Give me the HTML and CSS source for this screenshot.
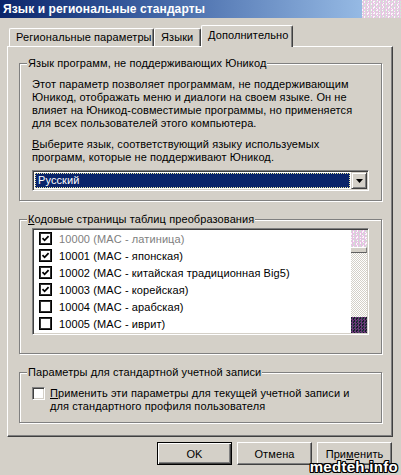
FILE: index.html
```html
<!DOCTYPE html>
<html lang="ru">
<head>
<meta charset="utf-8">
<title>Язык и региональные стандарты</title>
<link rel="stylesheet" href="styles.css">
</head>
<body>
<div class="window">
  <div class="titlebar">
    <span class="title">Язык и региональные стандарты</span>
    <span class="noise"></span>
  </div>
  <div class="tabs">
    <div class="tab t1">Региональные параметры</div>
    <div class="tab t2">Языки</div>
    <div class="tab t3 active">Дополнительно</div>
  </div>
  <div class="panel">
    <div class="group g1">
      <div class="group-title">Язык программ, не поддерживающих Юникод</div>
      <p class="para p1">Этот параметр позволяет программам, не поддерживающим<br>Юникод, отображать меню и диалоги на своем языке. Он не<br>влияет на Юникод-совместимые программы, но применяется<br>для всех пользователей этого компьютера.</p>
      <p class="para p2"><u>В</u>ыберите язык, соответствующий языку используемых<br>программ, которые не поддерживают Юникод.</p>
      <div class="combo">
        <div class="combo-field"><span class="combo-sel">Русский</span></div>
        <div class="combo-btn"><svg width="7" height="4" viewBox="0 0 7 4"><path d="M0 0H7L3.5 4Z" fill="#000"/></svg></div>
      </div>
    </div>
    <div class="group g2">
      <div class="group-title"><u>К</u>одовые страницы таблиц преобразования</div>
      <div class="listbox">
        <ul class="items">
          <li class="item disabled"><span class="flatcb"><svg width="9" height="9" viewBox="0 0 9 9"><path d="M1.5 4.2L3.6 6.3L7.6 2.2" fill="none" stroke="#000" stroke-width="1.8"/></svg></span><span class="label">10000 (MAC - латиница)</span></li>
          <li class="item"><span class="flatcb"><svg width="9" height="9" viewBox="0 0 9 9"><path d="M1.5 4.2L3.6 6.3L7.6 2.2" fill="none" stroke="#000" stroke-width="1.8"/></svg></span><span class="label">10001 (MAC - японская)</span></li>
          <li class="item"><span class="flatcb"><svg width="9" height="9" viewBox="0 0 9 9"><path d="M1.5 4.2L3.6 6.3L7.6 2.2" fill="none" stroke="#000" stroke-width="1.8"/></svg></span><span class="label">10002 (MAC - китайская традиционная Big5)</span></li>
          <li class="item"><span class="flatcb"><svg width="9" height="9" viewBox="0 0 9 9"><path d="M1.5 4.2L3.6 6.3L7.6 2.2" fill="none" stroke="#000" stroke-width="1.8"/></svg></span><span class="label">10003 (MAC - корейская)</span></li>
          <li class="item"><span class="flatcb"></span><span class="label">10004 (MAC - арабская)</span></li>
          <li class="item"><span class="flatcb"></span><span class="label">10005 (MAC - иврит)</span></li>
        </ul>
        <div class="vscroll">
          <div class="sb-top"></div>
          <div class="sb-thumb"></div>
          <div class="sb-track"></div>
          <div class="sb-bottom"></div>
        </div>
      </div>
    </div>
    <div class="group g3">
      <div class="group-title">Параметры для стандартной учетной записи</div>
      <label class="check">
        <span class="cb3d"></span>
        <span class="check-text"><u>П</u>рименить эти параметры для текущей учетной записи и<br>для стандартного профиля пользователя</span>
      </label>
    </div>
  </div>
  <div class="buttons">
    <button class="btn default">OK</button>
    <button class="btn">Отмена</button>
    <button class="btn">При<u>м</u>енить</button>
  </div>
  <div class="watermark">medteh.info</div>
</div>
</body>
</html>
```

FILE: styles.css
```css
* { box-sizing: border-box; }

html, body {
  margin: 0;
  padding: 0;
}

body {
  width: 401px;
  height: 475px;
  overflow: hidden;
  background: #d4d0c8;
  font-family: "Liberation Sans", Arial, sans-serif;
  font-size: 11px;
  letter-spacing: 0.1px;
  color: #000;
}

.window {
  position: relative;
  width: 401px;
  height: 475px;
}

.titlebar {
  display: flex;
  height: 18px;
  background: linear-gradient(to right, #0a246a 0%, #3a5ea0 35%, #a6caf0 100%);
}

.title {
  padding-left: 3px;
  line-height: 18px;
  font-weight: bold;
  font-size: 12px;
  color: #fff;
  letter-spacing: 0.1px;
}

.noise {
  margin-left: auto;
  width: 39px;
  height: 18px;
  background:
    repeating-conic-gradient(#e8c4e4 0 25%, transparent 0 50%) 0 0 / 3px 3px,
    repeating-conic-gradient(#d4e4d8 0 25%, #fbf8fb 0 50%) 1px 1px / 5px 5px;
}

/* tabs */
.tabs {
  display: flex;
  align-items: flex-end;
  height: 21px;
  margin-top: 7px;
  padding-left: 9px;
}

.tab {
  height: 18px;
  padding: 0 6px;
  line-height: 17px;
  white-space: nowrap;
  border-top: 1px solid #fff;
  border-left: 1px solid #fff;
  border-right: 1px solid #404040;
  border-radius: 2px 2px 0 0;
  box-shadow: inset -1px 0 #808080;
  background: #d4d0c8;
}

.t1 { width: 145px; }
.t2 { width: 47px; }
.t3 { width: 92px; }

.tab.active {
  position: relative;
  z-index: 1;
  height: 22px;
  margin-bottom: -1px;
  padding-top: 1px;
  padding-left: 6px;
}

/* panel */
.panel {
  width: 386px;
  height: 391px;
  margin-left: 7px;
  border: 1px solid;
  border-color: #fff #404040 #404040 #fff;
  box-shadow: inset -1px -1px #808080;
  padding-top: 16px;
}

.group {
  margin: 0 10px 0 11px;
  padding: 0 12px;
  border: 1px solid #808080;
  box-shadow: inset 1px 1px #fff, 1px 1px #fff;
}

.group-title {
  width: fit-content;
  margin: -7px 0 0 -5px;
  padding: 0 1px;
  line-height: 13px;
  background: #d4d0c8;
  white-space: nowrap;
}

.g1 { padding-bottom: 9px; }
.g2 { margin-top: 18px; padding-bottom: 18px; }
.g3 { margin-top: 18px; padding-bottom: 9px; }

.para {
  margin: 8px 0 0;
  line-height: 13px;
  white-space: nowrap;
}

/* combo */
.combo {
  display: flex;
  width: 337px;
  height: 21px;
  margin-top: 6px;
  border: 1px solid;
  border-color: #808080 #fff #fff #808080;
  box-shadow: inset 1px 1px #404040, inset -1px -1px #d4d0c8;
  padding: 1px;
  background: #fff;
}

.combo-field {
  flex: 1;
  display: flex;
  padding: 1px;
}

.combo-sel {
  flex: 1;
  background: #0a246a;
  color: #fff;
  border: 1px dotted #e8e4a0;
  padding-left: 2px;
  line-height: 13px;
}

.combo-btn {
  display: flex;
  align-items: center;
  justify-content: center;
  width: 16px;
  height: 17px;
  border: 1px solid;
  border-color: #d4d0c8 #404040 #404040 #d4d0c8;
  box-shadow: inset 1px 1px #fff, inset -1px -1px #808080;
  background: #d4d0c8;
}

/* listbox */
.listbox {
  display: flex;
  width: 337px;
  height: 107px;
  margin-top: 2px;
  border: 1px solid;
  border-color: #808080 #fff #fff #808080;
  box-shadow: inset 1px 1px #404040, inset -1px -1px #d4d0c8;
  padding: 1px;
  background: #fff;
}

.items {
  flex: 1;
  list-style: none;
  margin: 0;
  padding: 0;
}

.item {
  display: flex;
  align-items: center;
  height: 17px;
  padding-left: 5px;
}

.item.disabled .label { color: #808080; }

.flatcb {
  display: flex;
  align-items: center;
  justify-content: center;
  width: 13px;
  height: 13px;
  border: 1px solid #000;
  box-shadow: inset 0 0 0 1px #303030;
  background: #fff;
}

.label {
  margin-left: 7px;
  white-space: nowrap;
}

.vscroll {
  display: flex;
  flex-direction: column;
  width: 16px;
}

.sb-top {
  height: 17px;
  background:
    repeating-conic-gradient(#e8c0e4 0 25%, transparent 0 50%) 0 0 / 3px 3px,
    repeating-conic-gradient(#d0e0d4 0 25%, #fbf8fb 0 50%) 1px 0 / 5px 5px;
}

.sb-thumb {
  height: 6px;
  background: #d4d0c8;
  border-top: 1px solid #fff;
  border-bottom: 1px solid #606060;
  border-right: 1px solid #808080;
}

.sb-track {
  flex: 1;
  background: repeating-conic-gradient(#fff 0 25%, #d4d0c8 0 50%) 0 0 / 2px 2px;
}

.sb-bottom {
  height: 16px;
  background:
    repeating-conic-gradient(#6a3a78 0 25%, transparent 0 50%) 0 0 / 3px 3px,
    repeating-conic-gradient(#1e3a3a 0 25%, #18182a 0 50%) 1px 1px / 4px 4px;
}

/* checkbox row */
.check {
  display: flex;
  align-items: flex-start;
  margin-top: 8px;
  line-height: 13px;
  white-space: nowrap;
}

.cb3d {
  flex: none;
  width: 13px;
  height: 13px;
  border: 1px solid;
  border-color: #808080 #fff #fff #808080;
  box-shadow: inset 1px 1px #404040, inset -1px -1px #d4d0c8;
  background: #fff;
}

.check-text {
  margin-left: 5px;
}

/* buttons */
.buttons {
  display: flex;
  justify-content: flex-end;
  gap: 5px;
  margin-top: 5px;
  padding-right: 9px;
}

.btn {
  width: 75px;
  height: 23px;
  padding: 0;
  font-family: inherit;
  font-size: 11px;
  letter-spacing: 0.1px;
  color: #000;
  background: #d4d0c8;
  border: 1px solid;
  border-color: #fff #404040 #404040 #fff;
  box-shadow: inset -1px -1px #808080;
  border-radius: 0;
}

.btn.default {
  border-color: #000;
  box-shadow: inset 1px 1px #fff, inset -1px -1px #404040, inset -2px -2px #808080;
}

.watermark {
  position: absolute;
  right: 3px;
  bottom: 0;
  font-family: "Liberation Sans", Arial, sans-serif;
  font-weight: bold;
  font-size: 15px;
  line-height: 17px;
  letter-spacing: 0.3px;
  color: #fff;
  text-shadow:
    1px 0 #000, -1px 0 #000, 0 1px #000, 0 -1px #000,
    1px 1px #000, -1px -1px #000, 1px -1px #000, -1px 1px #000;
}
```
